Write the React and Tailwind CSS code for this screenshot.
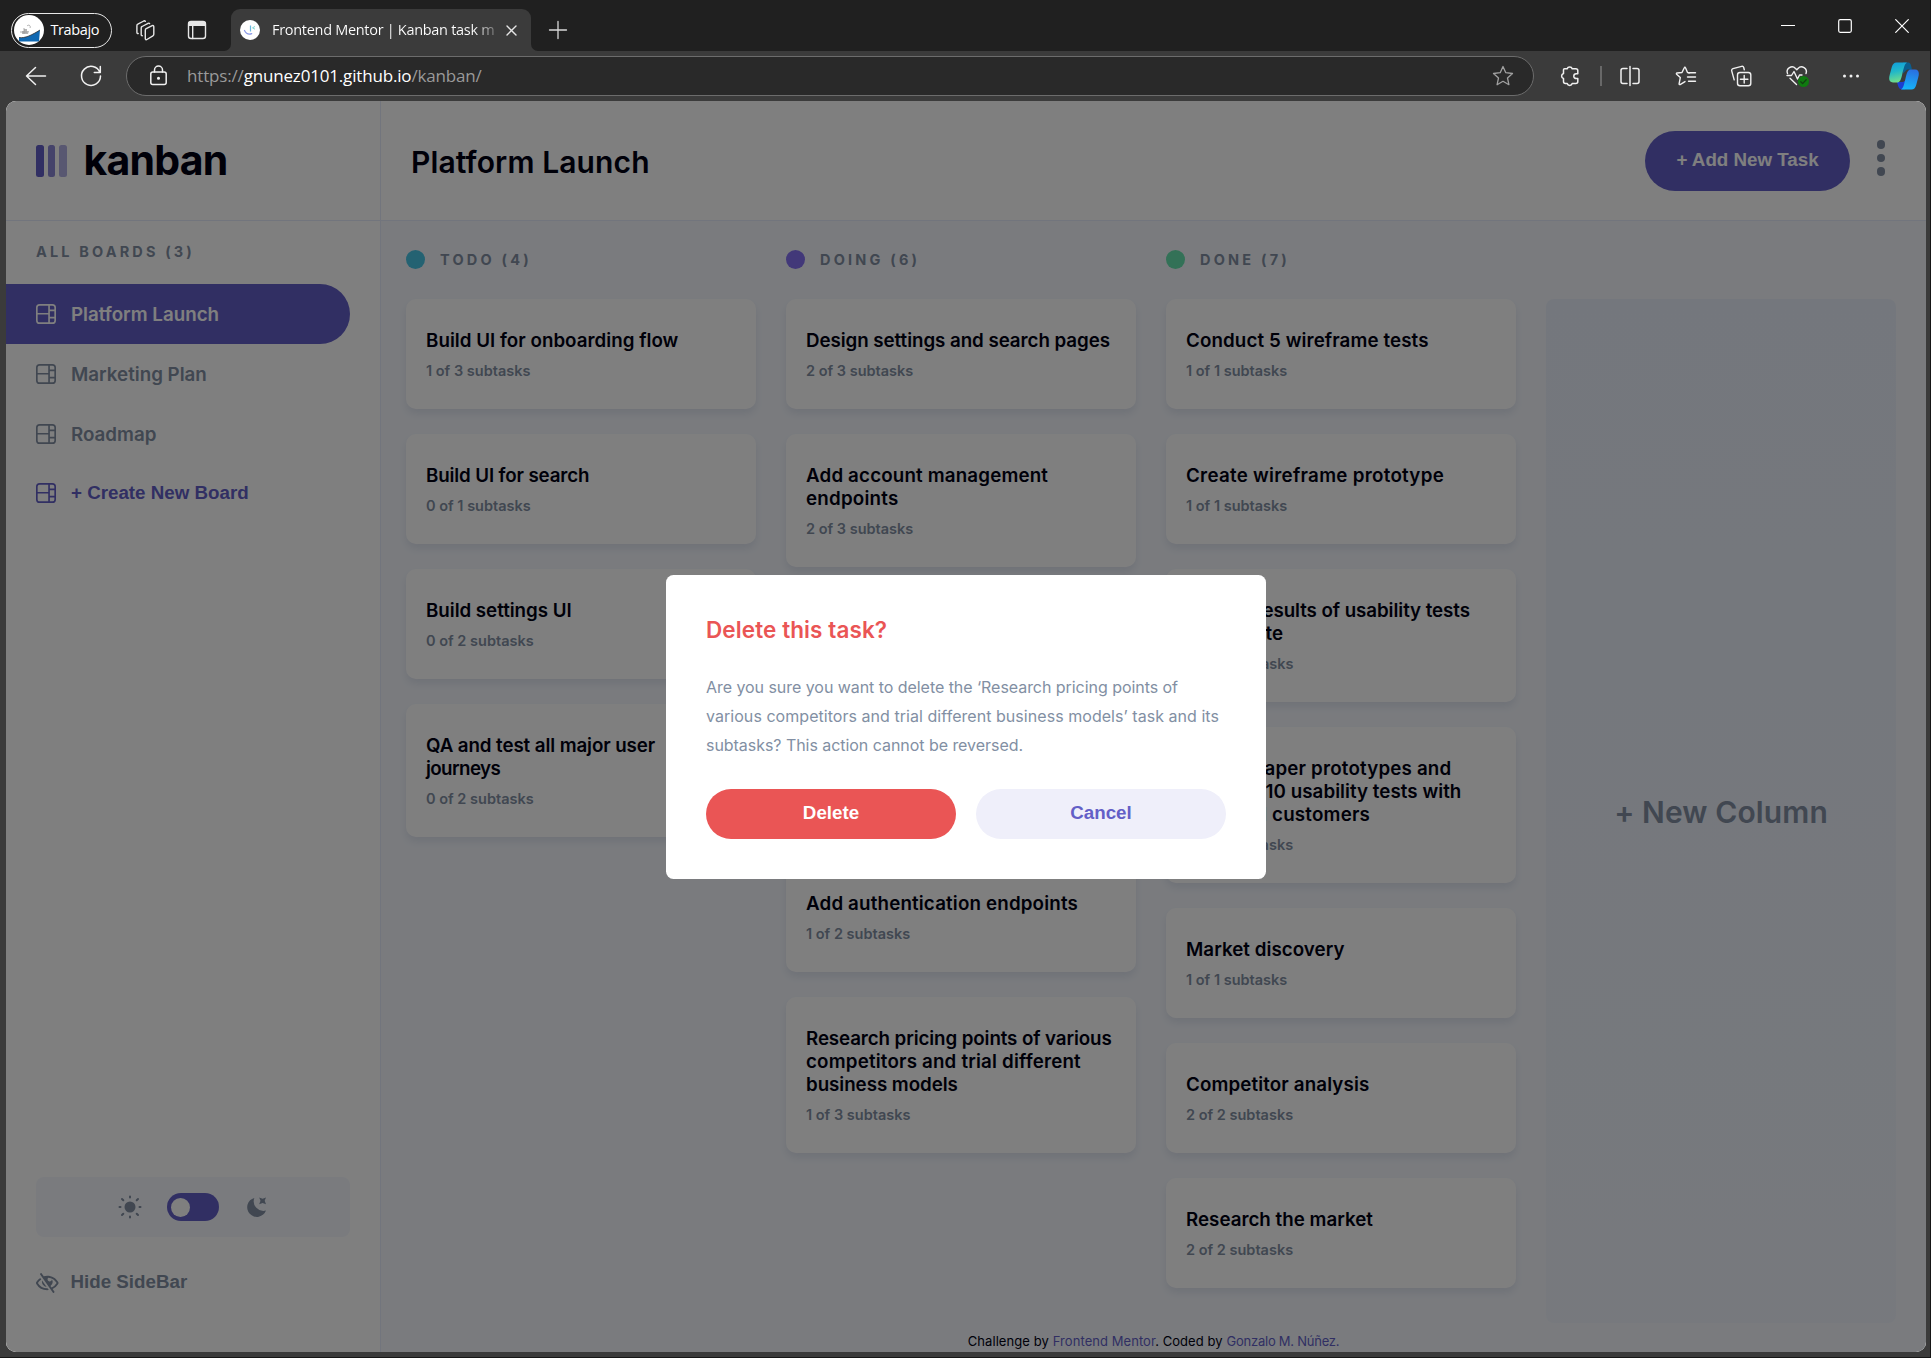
const boards = ["Platform Launch", "Marketing Plan", "Roadmap"];

const columns = [
  {
    name: "TODO",
    count: 4,
    dot: "bg-[#49c4e5]",
    tasks: [
      { title: [["Build UI for onboarding flow", "tracking-[0.02px]"]], done: 1, total: 3 },
      { title: [["Build UI for search", "tracking-[-0.14px]"]], done: 0, total: 1 },
      { title: [["Build settings UI", "tracking-[-0.04px]"]], done: 0, total: 2 },
      {
        title: [
          ["QA and test all major user", "tracking-[-0.1px]"],
          ["journeys", "tracking-[-0.6px]"],
        ],
        done: 0,
        total: 2,
      },
    ],
  },
  {
    name: "DOING",
    count: 6,
    dot: "bg-[#8471f2]",
    tasks: [
      { title: [["Design settings and search pages", "tracking-[-0.06px]"]], done: 2, total: 3 },
      {
        title: [
          ["Add account management", "tracking-[0.16px]"],
          ["endpoints", "tracking-[0.22px]"],
        ],
        done: 2,
        total: 3,
      },
      { title: [["Design onboarding flow", "tracking-normal"]], done: 1, total: 3 },
      { title: [["Add search endpoints", "tracking-normal"]], done: 1, total: 2 },
      { title: [["Add authentication endpoints", "tracking-[0.16px]"]], done: 1, total: 2 },
      {
        title: [
          ["Research pricing points of various", "tracking-[-0.11px]"],
          ["competitors and trial different", "tracking-[0.18px]"],
          ["business models", "tracking-[-0.05px]"],
        ],
        done: 1,
        total: 3,
      },
    ],
  },
  {
    name: "DONE",
    count: 7,
    dot: "bg-[#67e2ae]",
    tasks: [
      { title: [["Conduct 5 wireframe tests", "tracking-[0.1px]"]], done: 1, total: 1 },
      { title: [["Create wireframe prototype", "tracking-[0.28px]"]], done: 1, total: 1 },
      {
        title: [
          ["Review results of usability tests", "tracking-[-0.07px]"],
          ["and iterate", "tracking-[0.05px]"],
        ],
        done: 3,
        total: 3,
      },
      {
        title: [
          ["Create paper prototypes and", "tracking-[0.18px]"],
          ["conduct 10 usability tests with", "tracking-[0.04px]"],
          ["potential customers", "tracking-[0.2px]"],
        ],
        done: 2,
        total: 2,
      },
      { title: [["Market discovery", "tracking-[0.04px]"]], done: 1, total: 1 },
      { title: [["Competitor analysis", "tracking-[0.12px]"]], done: 2, total: 2 },
      { title: [["Research the market", "tracking-normal"]], done: 2, total: 2 },
    ],
  },
];

/* ---------- Browser chrome ---------- */

function Stroke({ className = "w-6 h-6", children, width = 1.3, box = "0 0 24 24" }) {
  return (
    <svg
      viewBox={box}
      className={`shrink-0 ${className}`}
      fill="none"
      stroke="currentColor"
      strokeWidth={width}
      strokeLinecap="round"
      strokeLinejoin="round"
    >
      {children}
    </svg>
  );
}

function Avatar() {
  return (
    <svg viewBox="0 0 30 30" className="w-[30px] h-[30px] shrink-0">
      <defs>
        <clipPath id="avatar-clip">
          <circle cx="15" cy="15" r="15" />
        </clipPath>
      </defs>
      <g clipPath="url(#avatar-clip)">
        <rect width="30" height="30" fill="#fff" />
        <path d="M8 19v-3h2v-2h3v2h2l-1 3z" fill="#b5b5b5" />
        <path d="M13 11c2-2 4 0 3 2M6 17h7M10 13v6" stroke="#999" strokeWidth="0.8" fill="none" />
        <path d="M5 22.5c6 1 13-2.5 21-7.5l-1 11.500H5z" fill="#0f68b2" />
        <path d="M5 22.5c6 1 13-2.5 21-7.5" stroke="#333" strokeWidth="0.8" fill="none" />
      </g>
    </svg>
  );
}

function TabStrip() {
  return (
    <div className="flex h-[51px] items-center bg-[#202020] pl-[11px] text-white">
      <div className="mt-[9px] flex h-[35px] w-[101px] items-center rounded-full border-[1.5px] border-[#e8e8e8] pl-[1.5px]">
        <Avatar />
        <span className="ml-[7px] font-['Open_Sans'] text-[14.5px] tracking-[-0.4px]">Trabajo</span>
      </div>
      <Stroke className="mt-[9px] ml-[21px] h-6 w-6 text-[#e6e6e6]" width={1.4}>
        <path d="M12.3 12.2c0-.7.3-1.2.9-1.5l6-3c.8-.4 1.600.1 1.600 1v7.600c0 .7-.3 1.2-.9 1.5l-6 3.700c-.8.5-1.600 0-1.600-.9z" />
        <path d="M9.3 17.700c-.6.1-1.100-.3-1.100-1V10c0-.7.3-1.200.9-1.500l6-3.200c.6-.3 1.200-.2 1.500.3" />
        <path d="M5.200 15.500c-.7.2-1.300-.2-1.300-1V7.700c0-.7.3-1.200.9-1.500l6-3.200c.6-.3 1.200-.2 1.500.3" />
      </Stroke>
      <Stroke className="mt-[9px] ml-[28px] h-6 w-6 text-[#e6e6e6]" width={1.4}>
        <rect x="3.5" y="3.5" width="17" height="17" rx="2.5" />
        <path d="M3.5 6h17" strokeWidth="4" strokeLinecap="butt" />
        <path d="M7.700 8v12.500" />
      </Stroke>
      <svg viewBox="0 0 7 7" className="ml-[15px] h-[7px] w-[7px] shrink-0 self-end">
        <path d="M7 0v7H0a7 7 0 0 0 7-7z" fill="#3b3b3b" />
      </svg>
      <div className="flex h-[42px] w-[300px] shrink-0 items-center self-end rounded-t-[9px] bg-[#3b3b3b] pl-[9px]">
        <svg viewBox="0 0 20 20" className="h-5 w-5 shrink-0">
          <circle cx="10" cy="10" r="10" fill="#fff" />
          <path d="M4.500 10.500c1.500 3 4.500 4.200 7.200 3.200" stroke="#8c9be8" strokeWidth="1.3" fill="none" strokeLinecap="round" />
          <path d="M10.500 5.500v6" stroke="#6cb8de" strokeWidth="1.2" />
          <path d="M15 6.500l-2.500 1.300L15 9.200" stroke="#7fd6d2" strokeWidth="1" fill="none" />
        </svg>
        <div className="ml-3 w-[224px] overflow-hidden bg-linear-to-r from-white from-90% to-[#6f6f6f] bg-clip-text font-['Open_Sans'] text-[14.5px] tracking-[-0.3px] whitespace-nowrap text-transparent">
          Frontend Mentor | Kanban task m
        </div>
        <Stroke className="ml-[9px] h-[13px] w-[13px] text-[#e6e6e6]" box="0 0 13 13" width={1.4}>
          <path d="M2 2l9 9M11 2l-9 9" />
        </Stroke>
      </div>
      <svg viewBox="0 0 7 7" className="h-[7px] w-[7px] shrink-0 self-end">
        <path d="M0 0v7h7a7 7 0 0 1-7-7z" fill="#3b3b3b" />
      </svg>
      <Stroke className="mt-[9px] ml-[10px] h-5 w-5 text-[#d8d8d8]" box="0 0 20 20">
        <path d="M10 1.500v17M1.500 10h17" />
      </Stroke>
      <div className="ml-auto flex items-center gap-[43px] pr-[21px]">
        <Stroke className="h-[14px] w-[14px]" box="0 0 14 14" width={1.2}>
          <path d="M.5 6.500h13" />
        </Stroke>
        <Stroke className="h-[14px] w-[14px]" box="0 0 14 14" width={1.2}>
          <rect x="0.7" y="0.7" width="12.6" height="12.6" rx="1.5" />
        </Stroke>
        <Stroke className="h-[14px] w-[14px]" box="0 0 14 14" width={1.2}>
          <path d="M.7.7l12.600 12.600M13.300.7L.7 13.300" />
        </Stroke>
      </div>
    </div>
  );
}

function Copilot() {
  return (
    <svg viewBox="0 0 30 28" className="ml-[26px] h-[28px] w-[30px] shrink-0">
      <defs>
        <linearGradient id="cp-left" x1="0" y1="0" x2="0.2" y2="1">
          <stop offset="0" stopColor="#0f9bdc" />
          <stop offset="0.5" stopColor="#22b8c8" />
          <stop offset="1" stopColor="#6fdc8c" />
        </linearGradient>
        <linearGradient id="cp-right" x1="0.6" y1="0" x2="0.4" y2="1">
          <stop offset="0" stopColor="#2a6fe0" />
          <stop offset="1" stopColor="#15b5fa" />
        </linearGradient>
      </defs>
      <path d="M14 .5h5c2.500 0 3 2.500 4 7h-5l-4 4z" fill="#0a5e8f" />
      <path d="M8 20h6l5-3-3 10.500h-3c-3.500 0-4-4.500-5-7.500z" fill="#1b3fd0" />
      <path d="M7.500.5H18c-2.500 1.500-3 5-4.500 10.500C12 18 11 20.500 8 20.500H4C0 20.500-.5 17 .8 12.500l2-7.500C3.800 2 5 .5 7.500.5z" fill="url(#cp-left)" />
      <path d="M22.500 27.500H12c2.500-1.500 3-5 4.500-11C18 10 19 7.500 22 7.500h4c4 0 4.500 3.500 3.200 8l-2 7.500c-1 3-2.200 4.500-4.700 4.500z" fill="url(#cp-right)" />
    </svg>
  );
}

function Toolbar() {
  return (
    <div className="flex h-[50px] items-center bg-[#3b3b3b] text-[#f0f0f0]">
      <Stroke className="ml-6 h-6 w-6" width={1.5}>
        <path d="M21.500 12H2.500M11.500 3.500L2.500 12l9 8.500" />
      </Stroke>
      <Stroke className="ml-[31px] h-6 w-6" width={1.5}>
        <path d="M20.800 8.300A9.500 9.500 0 1 0 21.500 12M21.300 2.500v6h-6" />
      </Stroke>
      <div className="ml-[23px] flex h-10 w-[1408px] items-center rounded-full border-[1.5px] border-[#6c6c6c] bg-[#292929]">
        <Stroke className="ml-5 h-6 w-6" width={1.5}>
          <rect x="3.8" y="8" width="15.4" height="12.5" rx="2" />
          <path d="M7.500 8V6a4 4 0 0 1 8 0v2" />
          <circle cx="11.5" cy="14.2" r="0.8" fill="currentColor" />
        </Stroke>
        <span className="ml-[16px] font-['Open_Sans'] text-[17px] tracking-[-0.17px] text-[#9a9a9a]">
          https://<span className="text-white">gnunez0101.github.io</span>/kanban/
        </span>
        <Stroke className="mr-[18px] ml-auto h-6 w-6 text-[#a0a0a0]">
          <path d="M12 2.500l2.800 6.200 6.700.8-5 4.500 1.400 6.700L12 17.300l-5.900 3.400L7.500 14l-5-4.500 6.700-.8z" />
        </Stroke>
      </div>
      <Stroke className="ml-[24px] h-6 w-6" width={1.5}>
        <path d="M6.500 4.800h2.700a2.600 2.600 0 0 1 5 0h3.600a2 2 0 0 1 2 2v3h-1.600a2.400 2.400 0 0 0 0 4.800h1.600v2.900a2 2 0 0 1-2 2h-3.600a2.600 2.600 0 0 1-5 0H7.500a2 2 0 0 1-2-2v-3a2.600 2.600 0 0 1 0-5V5.800a1 1 0 0 1 1-1z" />
      </Stroke>
      <div className="ml-[18px] h-5 w-[1.5px] bg-[#686868]" />
      <Stroke className="ml-[16px] h-6 w-6" width={1.5}>
        <path d="M12 2.500v19M9 4.500H5a2 2 0 0 0-2 2v11a2 2 0 0 0 2 2h4M15 4.500h4a2 2 0 0 1 2 2v11a2 2 0 0 1-2 2h-4" />
      </Stroke>
      <Stroke className="ml-[32px] h-6 w-6" width={1.4}>
        <path d="M15.500 8.800l-2-.3-2-4.800c-.2-.6-1-.6-1.200 0L8 8.500l-5 .5c-.6.1-.8.8-.4 1.200l3.700 3.400-1.200 6.200c-.1.6.5 1 1 .8l4.900-3" />
        <path d="M14.500 8.800H21.500M13.500 13H21.500M14.500 17.200H21.500" />
      </Stroke>
      <Stroke className="ml-[31px] h-6 w-6" width={1.4}>
        <rect x="8.5" y="8.5" width="13.3" height="13.3" rx="2.5" />
        <path d="M15.200 11.500v7.500M11.400 15.200h7.500M15.300 5.700l-.6-2.200c-.3-1-1.100-1.500-2.100-1.200L4 4.700c-1 .3-1.600 1.200-1.300 2.200l2.500 9" />
      </Stroke>
      <Stroke className="ml-[32px] h-6 w-6 overflow-visible" width={1.4}>
        <path d="M2.500 9.500a4.800 4.800 0 0 1 8-5l1.300 1.300L13 4.500a4.800 4.800 0 0 1 8 5M5 14.300l6.500 6.200M2 11.500h4.500L9 7.500l3.500 7.500 2-4H17" />
        <circle cx="18.5" cy="17.5" r="5.5" fill="#0f7a0f" stroke="none" />
        <path d="M15.800 17.800l1.800 1.800 3.600-3.800" stroke="#123f12" strokeWidth="1.3" />
      </Stroke>
      <svg viewBox="0 0 24 24" className="ml-[30px] h-6 w-6 shrink-0" fill="currentColor">
        <circle cx="5.5" cy="12" r="1.5" />
        <circle cx="12" cy="12" r="1.5" />
        <circle cx="18.5" cy="12" r="1.5" />
      </svg>
      <Copilot />
    </div>
  );
}

/* ---------- Application ---------- */

function BoardIcon() {
  return (
    <svg viewBox="0 0 16 16" className="h-5 w-5 shrink-0" fill="currentColor">
      <path d="M0 2.889A2.889 2.889 0 0 1 2.889 0H13.11A2.889 2.889 0 0 1 16 2.889V13.11A2.888 2.888 0 0 1 13.111 16H2.89A2.889 2.889 0 0 1 0 13.111V2.89Zm1.333 5.555v4.667c0 .859.697 1.556 1.556 1.556h6.889V8.444H1.333Zm8.445-1.333V1.333h-6.89A1.556 1.556 0 0 0 1.334 2.89V7.11h8.445Zm4.889-1.333H11.11v4.444h3.556V5.778Zm0 5.778H11.11v3.11h2a1.556 1.556 0 0 0 1.556-1.555v-1.555Zm0-7.112V2.89a1.555 1.555 0 0 0-1.556-1.556h-2v3.111h3.556Z" />
    </svg>
  );
}

function EyeOff() {
  return (
    <svg viewBox="0 0 18 16" className="mt-[2px] h-5 w-[22.5px] shrink-0" fill="currentColor">
      <path d="M8.522 11.223a4.252 4.252 0 0 1-3.654-5.22l3.654 5.22ZM9 12.25A8.685 8.685 0 0 1 1.5 8a8.612 8.612 0 0 1 2.76-2.864l-.86-1.23A10.112 10.112 0 0 0 .208 7.238a1.5 1.5 0 0 0 0 1.524A10.187 10.187 0 0 0 9 13.75c.414 0 .828-.025 1.239-.074l-1-1.43A8.88 8.88 0 0 1 9 12.25Zm8.792-3.488a10.14 10.14 0 0 1-4.486 4.046l1.504 2.148a.375.375 0 0 1-.092.523l-.648.453a.375.375 0 0 1-.523-.092L3.19 1.044A.375.375 0 0 1 3.282.52L3.93.068a.375.375 0 0 1 .523.092l1.735 2.479A9.308 9.308 0 0 1 9 2.25c3.746 0 7.031 2 8.792 4.988a1.5 1.5 0 0 1 0 1.524ZM16.5 8a8.674 8.674 0 0 0-6.755-4.219A1.75 1.75 0 1 0 12.75 5v-.001a4.25 4.25 0 0 1-1.154 5.366l.834 1.192A8.641 8.641 0 0 0 16.5 8Z" />
    </svg>
  );
}

function Sun() {
  return (
    <svg viewBox="0 0 24 24" className="h-6 w-6" fill="currentColor" stroke="currentColor" strokeWidth="2" strokeLinecap="round">
      <circle cx="12" cy="12" r="5.5" stroke="none" />
      <path d="M12 1.500v1M12 21.500v1M1.500 12h1M21.500 12h1M4 4l1.300 1.300M18.700 18.700L20 20M4 20l1.300-1.300M18.700 5.300L20 4" />
    </svg>
  );
}

function Moon() {
  return (
    <svg viewBox="0 0 20 20" className="h-5 w-5" fill="currentColor">
      <path d="M7.300.9A9.700 9.700 0 1 0 19 13.600 9.800 9.800 0 0 1 7.300.9z" />
      <path d="M12.200.4l3.400 1.300L19 .4l-1.300 3.400L19 7.200l-3.400-1.300-3.400 1.300 1.300-3.400z" />
    </svg>
  );
}

function Sidebar() {
  return (
    <aside className="flex w-[375px] shrink-0 flex-col border-r border-[#e4ebfa] bg-white text-[#828fa3]">
      <div className="flex h-[120px] shrink-0 items-center border-b border-[#e4ebfa] pl-[30px]">
        <div className="mt-[1px] flex gap-[4px]">
          <div className="h-[31.5px] w-[7.5px] rounded-[2.5px] bg-[#635fc7]" />
          <div className="h-[31.5px] w-[7.5px] rounded-[2.5px] bg-[#635fc7]/75" />
          <div className="h-[31.5px] w-[7.5px] rounded-[2.5px] bg-[#635fc7]/50" />
        </div>
        <span className="ml-[17px] text-[41px] leading-none font-bold tracking-[-0.8px] text-[#000112]">kanban</span>
      </div>
      <h2 className="mt-[21px] pl-[30px] text-[14.5px] leading-[19px] font-bold tracking-[3.15px]">ALL BOARDS (3)</h2>
      <nav className="mt-[23px] flex flex-col">
        {boards.map((board, i) => (
          <a
            key={board}
            className={`flex h-[60px] w-[344px] items-center gap-[15px] rounded-r-full pl-[30px] text-[18.75px] font-semibold ${i === 0 ? "bg-[#635fc7] text-white" : ""}`}
          >
            <BoardIcon />
            <span className="pt-[2px]">{board}</span>
          </a>
        ))}
        <a className="flex h-[58px] items-center gap-[15px] pl-[30px] font-['Liberation_Sans'] text-[18.75px] font-bold text-[#635fc7]">
          <BoardIcon />
          <span className="pt-[1px]">+ Create New Board</span>
        </a>
      </nav>
      <div className="mt-auto ml-[30px] flex h-[60px] w-[314px] items-center rounded-lg bg-[#f4f7fd] pl-[82px]">
        <Sun />
        <div className="ml-[25px] flex h-7 w-[52px] items-center rounded-full bg-[#635fc7] pl-1">
          <div className="h-[19px] w-[19px] rounded-full bg-white" />
        </div>
        <div className="ml-7">
          <Moon />
        </div>
      </div>
      <div className="mt-[34px] mb-[59px] flex items-center gap-[13px] pl-[30px] font-['Liberation_Sans'] text-[18.75px] leading-5 font-bold">
        <EyeOff />
        <span className="-ml-[1px]">Hide SideBar</span>
      </div>
    </aside>
  );
}

function Card({ task }) {
  return (
    <article className="rounded-[10px] bg-white px-5 py-[30px] shadow-[0_5px_7.5px_rgba(54,78,126,0.1)]">
      <h3 className="text-[18.75px] leading-[23px] font-semibold text-[#000112]">
        {task.title.map(([line, tracking]) => (
          <span key={line} className={`block whitespace-nowrap ${tracking}`}>
            {line}
          </span>
        ))}
      </h3>
      <p className="mt-[9px] -mb-px text-[14.5px] leading-[19px] font-semibold text-[#828fa3]">
        {task.done} of {task.total} subtasks
      </p>
    </article>
  );
}

function Board() {
  return (
    <div className="flex min-h-0 flex-1 flex-col bg-[#f4f7fd]">
      <div className="flex h-[1102px] gap-[30px] pl-[25px]">
        {columns.map((col) => (
          <section key={col.name} className="w-[350px] shrink-0 pt-[28px]">
            <div className="flex h-[20px] items-center gap-[15px]">
              <span className={`h-[19px] w-[19px] rounded-full ${col.dot}`} />
              <h2 className="pt-[2px] text-[14.5px] leading-5 font-bold tracking-[3.2px] text-[#828fa3]">
                {col.name} ({col.count})
              </h2>
            </div>
            <div className="mt-[30px] flex flex-col gap-[25px]">
              {col.tasks.map((task) => (
                <Card key={task.title[0][0]} task={task} />
              ))}
            </div>
          </section>
        ))}
        <section className="mt-[78px] flex w-[350px] shrink-0 items-center justify-center rounded-lg bg-linear-to-b from-[#e9effa] to-[#e9effa]/50">
          <span className="pt-[2px] text-[30px] font-semibold tracking-[0.1px] text-[#828fa3]">+ New Column</span>
        </section>
      </div>
      <footer className="mt-[9px] flex justify-center gap-1 text-[13px] leading-[18px] tracking-[0.06px] text-[#000112]">
        <span>Challenge by</span>
        <span>
          <a className="text-[#635fc7]">Frontend Mentor</a>. Coded by
        </span>
        <a className="tracking-[-0.25px] text-[#635fc7]">Gonzalo M. Núñez.</a>
      </footer>
    </div>
  );
}

function DeleteDialog() {
  return (
    <div className="absolute inset-0 flex items-start justify-center bg-black/50 pt-[474px]">
      <div role="dialog" className="h-[304px] w-[600px] rounded-[7.5px] bg-white px-10 pt-10">
        <h2 className="pt-px text-[22.5px] leading-[28px] font-semibold tracking-[0.1px] text-[#ea5555]">
          Delete this task?
        </h2>
        <p className="mt-[29px] text-[16px] leading-[29px] text-[#828fa3]">
          <span className="block tracking-[-0.05px] whitespace-nowrap">
            Are you sure you want to delete the ‘Research pricing points of
          </span>
          <span className="block tracking-[0.046px] whitespace-nowrap">
            various competitors and trial different business models’ task and its
          </span>
          <span className="block tracking-[-0.046px] whitespace-nowrap">subtasks? This action cannot be reversed.</span>
        </p>
        <div className="mt-[29px] flex gap-5 font-['Liberation_Sans'] text-[18.75px] font-bold">
          <button className="h-[50px] flex-1 rounded-full bg-[#ea5555] pb-[2px] text-white">Delete</button>
          <button className="h-[50px] flex-1 rounded-full bg-[#efeffa] pb-[2px] text-[#635fc7]">Cancel</button>
        </div>
      </div>
    </div>
  );
}

export default function App() {
  return (
    <div className="flex h-[1358px] w-[1931px] flex-col overflow-hidden border-r border-b border-[#161616] bg-[#3b3b3b] font-['Inter',sans-serif]">
      <TabStrip />
      <Toolbar />
      <div className="relative ml-[6px] flex h-[1251px] w-[1920px] shrink-0 overflow-hidden rounded-[10px] bg-white">
        <Sidebar />
        <main className="flex min-w-0 flex-1 flex-col">
          <header className="flex h-[120px] shrink-0 items-center border-b border-[#e4ebfa] bg-white pl-[30px]">
            <h1 className="pt-[3px] text-[30px] font-semibold tracking-[0.12px] text-[#000112]">Platform Launch</h1>
            <button className="ml-auto h-[60px] w-[205px] rounded-full bg-[#635fc7] font-['Liberation_Sans'] text-[18.75px] font-bold text-white">
              + Add New Task
            </button>
            <div className="mr-[41px] mb-[5px] ml-[27px] flex flex-col gap-[5px]">
              <span className="h-[8.5px] w-2 rounded-full bg-[#828fa3]" />
              <span className="h-[8.5px] w-2 rounded-full bg-[#828fa3]" />
              <span className="h-[8.5px] w-2 rounded-full bg-[#828fa3]" />
            </div>
          </header>
          <Board />
        </main>
        <DeleteDialog />
      </div>
    </div>
  );
}
